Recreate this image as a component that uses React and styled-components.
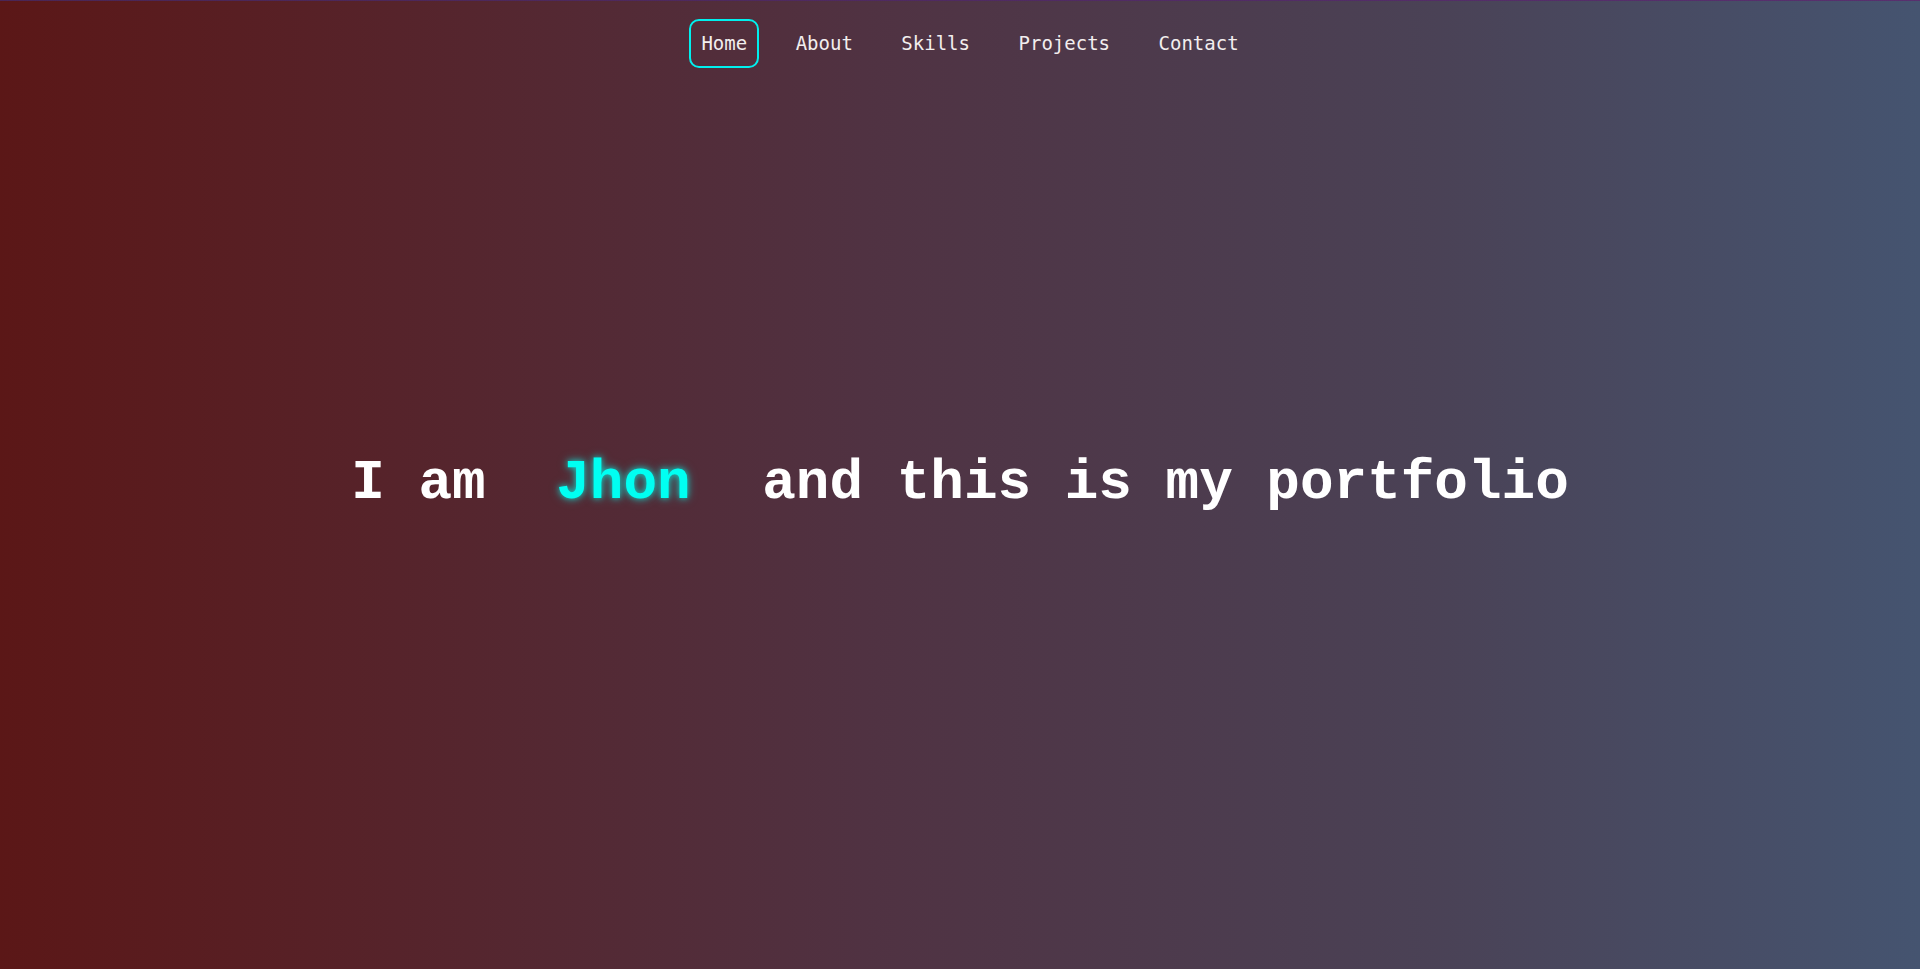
import React from "react";
import styled, { createGlobalStyle } from "styled-components";

const GlobalStyle = createGlobalStyle`
  html, body {
    margin: 0;
    padding: 0;
    height: 100%;
  }
  body {
    font-family: "DejaVu Sans Mono", "Liberation Mono", monospace;
    background: #4f3544;
  }
  #root {
    min-height: 100vh;
  }
`;

const Page = styled.div`
  display: grid;
  grid-template-rows: 1fr;
  grid-template-columns: 1fr;
  min-height: 100vh;
  box-sizing: border-box;
  border-top: 1px solid transparent;
  border-image: linear-gradient(to right, #4a2656, #4f2a62 50%, #58306e) 1;
  background: linear-gradient(to right, #5b1717 0%, #503242 45%, #4a4256 75%, #455470 100%);
`;

const NavBar = styled.nav`
  grid-area: 1 / 1;
  align-self: start;
  display: flex;
  justify-content: center;
  padding: 18px 0 0 20px;
  z-index: 1;
`;

const NavList = styled.ul`
  display: flex;
  gap: 24.5px;
  list-style: none;
  margin: 0;
  padding: 0;
`;

const NavItem = styled.li`
  display: block;
`;

const NavLink = styled.a`
  display: block;
  padding: 11px 10px 12px;
  line-height: 22px;
  font-size: 19px;
  font-family: "DejaVu Sans Mono", "Liberation Mono", monospace;
  color: #f2eeee;
  text-decoration: none;
  border: 2px solid ${(p) => (p.$active ? "#00f0ee" : "transparent")};
  border-radius: 10px;
  cursor: pointer;
`;

const Hero = styled.section`
  grid-area: 1 / 1;
  align-self: center;
  justify-self: center;
  padding-bottom: 5px;
`;

const Title = styled.h1`
  margin: 0;
  font-family: "Courier New", "Nimbus Mono PS", "Nimbus Mono L", "FreeMono", "Courier 10 Pitch", "Liberation Mono", monospace;
  font-weight: 700;
  font-size: 56px;
  line-height: normal;
  color: #ffffff;
  white-space: nowrap;
`;

const Name = styled.span`
  display: inline-block;
  margin: 0 38px 0 37px;
  color: #00fff2;
  text-shadow: 0 0 6px rgba(0, 255, 240, 0.75), 0 0 12px rgba(0, 255, 240, 0.35);
`;

const links = ["Home", "About", "Skills", "Projects", "Contact"];

export default function App() {
  return (
    <>
      <GlobalStyle />
      <Page>
        <NavBar>
          <NavList>
            {links.map((l, i) => (
              <NavItem key={l}>
                <NavLink $active={i === 0}>{l}</NavLink>
              </NavItem>
            ))}
          </NavList>
        </NavBar>
        <Hero>
          <Title>
            I am <Name>Jhon</Name> and this is my portfolio
          </Title>
        </Hero>
      </Page>
    </>
  );
}
